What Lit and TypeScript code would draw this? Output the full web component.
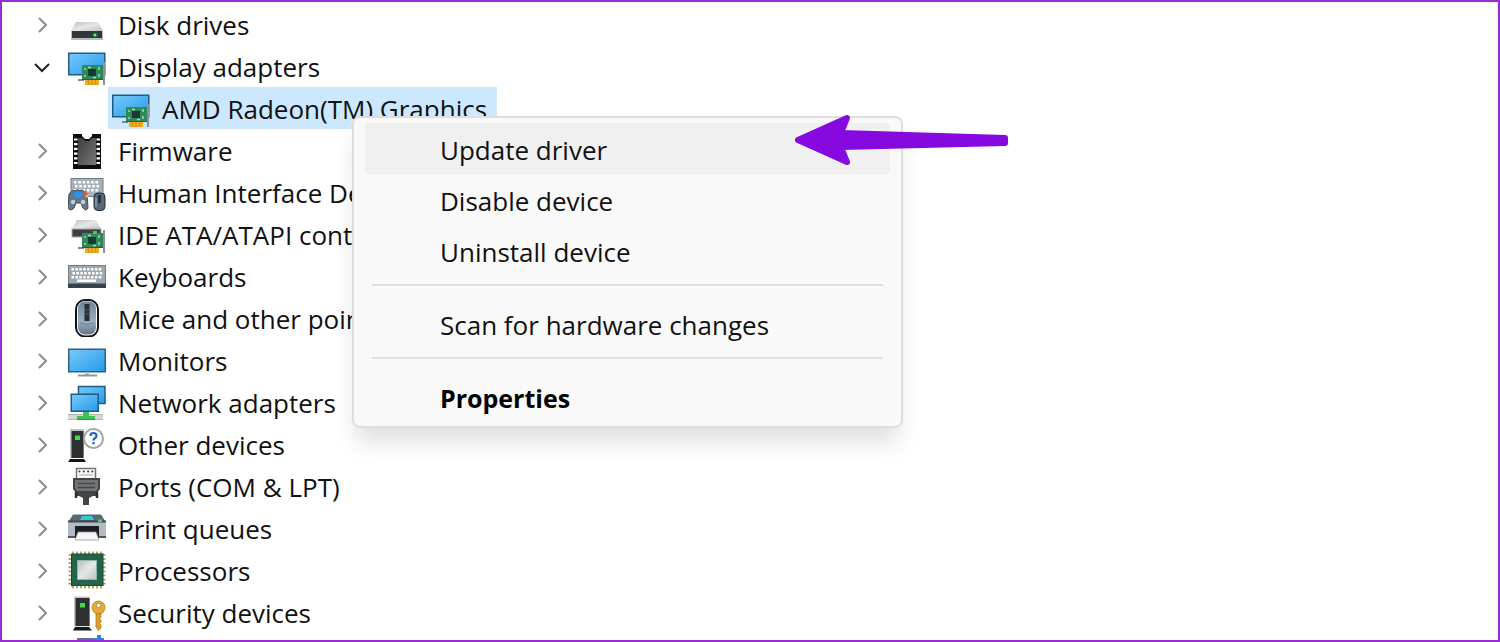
import { LitElement, html, svg, css } from "lit";
import { customElement } from "lit/decorators.js";
import { classMap } from "lit/directives/class-map.js";

const range = (n: number) => Array.from({ length: n }, (_, i) => i);

const card = svg`
  <path d="M10 33h6" stroke="#5b6570" stroke-width="1.5"/>
  <rect x="17" y="33" width="14" height="5" fill="#f0a81e"/>
  <path d="M20.5 33v5M24 33v5M27.500 33v5" stroke="#c98a1a" stroke-width=".8"/>
  <rect x="14" y="18" width="21" height="15" fill="#2f8a5b"/>
  <path d="M14 32.500h21" stroke="#1d6340"/>
  <rect x="20" y="22" width="8" height="7" fill="#173c2f"/>
  <path d="M17 21v2M17 28v2M31 20v3M31 27v3M20 20.500h3M25 30.500h3" stroke="#a6d9b4" stroke-width="1.5"/>
  <rect x="35" y="15" width="2" height="23" fill="#8a9096"/>`;

const keys = (x: number, y: number, cols: number, rows: number, step: number) =>
  range(rows).map((r) => range(cols).map((c) => svg`<rect x=${x + c * step + (r % 2)} y=${y + r * 4} width="2.500" height="2.500" fill="#fff"/>`));

const icons: Record<string, unknown> = {
  disk: svg`
    <path d="M8 17h22l5 9H3z" fill="url(#silver)"/>
    <rect x="3" y="26" width="32" height="9" fill="#b9bcbf"/>
    <rect x="4" y="26" width="30" height="7" fill="#333638"/>
    <circle cx="27" cy="30" r="2.500" fill="#1c7a2a"/><circle cx="27" cy="30" r="1.300" fill="#5dff6a"/>`,
  display: svg`
    <rect x=".75" y="6.250" width="36" height="21.500" fill="url(#screen)" stroke="#1d5c86" stroke-width="1.500"/>${card}`,
  firmware: svg`
    <path d="M5 3h9v2l3 3h4l3-3V3h9v35H5z" fill="#0c0c0c"/>
    ${range(6).map((i) => svg`<path d=${`M6 ${8.500 + i * 4.700}h3.500M28.500 ${8.500 + i * 4.700}H32`} stroke="#fff" stroke-width="2.200"/>`)}
    <path d="M10 7h4l3 3h4l3-3h4v27H10z" fill="url(#chip)"/>`,
  hid: svg`
    <rect x="3" y="5.500" width="32" height="18" fill="#a9b2bb" stroke="#6f7c89"/>
    ${keys(6, 8, 6, 3, 4.300)}
    <path d="M4 18q6-2 12 0l3 3 1 14q-2 4-5 0l-2-5H8l-2 5q-4 4-6 0l1-14z" fill="#66798a" stroke="#3d4c59"/>
    <path d="M6 19h8v3l-2 3H8l-2-3z" fill="#2596e8"/>
    <circle cx="17" cy="20" r="2" fill="#e4553b"/><circle cx="19" cy="23" r="1.500" fill="#efc33c"/>
    <circle cx="5" cy="29" r="2.200" fill="#c5ced7"/><circle cx="15" cy="29" r="2.200" fill="#c5ced7"/>
    <rect x="26" y="20" width="11" height="17.500" rx="4" fill="#56697a" stroke="#202a33"/>
    <path d="M31.500 22v8" stroke="#1f2830" stroke-width="2.500"/><path d="M28 25v9" stroke="#a8b7c5"/>`,
  ide: svg`
    <path d="M9 5h19l5 9H4z" fill="url(#silver)"/>
    <rect x="4" y="14" width="29" height="8" fill="#3d4042" stroke="#aaa"/>
    ${card}<rect x="25" y="16" width="4" height="3" fill="#37d44a"/>`,
  keyboard: svg`
    <rect x=".5" y="8.500" width="37" height="22" fill="#9fa8af" stroke="#747d84"/>
    <rect x="0" y="26.500" width="38" height="4.500" fill="#35424b"/>
    ${keys(3.500, 11, 8, 3, 3.900)}<rect x="9" y="22.500" width="19" height="2.500" fill="#fff"/>`,
  mouse: svg`
    <rect x="8" y="1" width="22" height="36.500" rx="9" fill="#f6f6f6" stroke="#101214" stroke-width="2"/>
    <rect x="10" y="2.500" width="18" height="33" rx="7" fill="url(#mouse)"/>
    <path d="M12 24q7 3 14 0" stroke="#72849a" fill="none"/>
    <rect x="16.500" y="5" width="5" height="17" fill="#272d33"/><path d="M17 11h4M17 15h4" stroke="#5b666f"/>`,
  monitor: svg`
    <rect x=".75" y="8.250" width="36.500" height="22.500" fill="url(#screen)" stroke="#33607d" stroke-width="1.500"/>
    <path d="M19 31v3" stroke="#b8c2c8" stroke-width="4"/><path d="M10 34.500h19" stroke="#8b989f" stroke-width="2"/>`,
  network: svg`
    <rect x="10.500" y="3.500" width="26.500" height="17" fill="url(#screen)" stroke="#1d5c86" stroke-width="1.500"/>
    <rect x="0" y="31" width="35" height="6" fill="#d4d8d4"/><path d="M0 31.500h35M0 36.500h35" stroke="#b3b8b3"/>
    <path d="M9 37v-4h6v-4h6v4h6v4z" fill="#3dc353"/><path d="M9 36.500h18" stroke="#289b3d"/>
    <rect x="3.250" y="11.250" width="27" height="17" fill="url(#screen)" stroke="#1d5c86" stroke-width="1.500"/>`,
  other: svg`
    <path d="M2 4h14v29H2z" fill="#c2c4c5"/><rect x="3.500" y="6" width="12" height="27" fill="#2d2f30"/>
    <path d="M2 34h14l2 3H0z" fill="#161718"/>
    <circle cx="25.500" cy="13.500" r="9.500" fill="#fff" stroke="#a2a6a9" stroke-width="2"/>
    <rect x="7" y="10.500" width="5" height="4.500" fill="#3ddc4a"/>
    <path d="M22.500 11q0-3 3-3t3 2.700q0 1.600-1.600 2.600t-1.400 2.400M25.500 17v2.200" fill="none" stroke="#1763c7" stroke-width="2.200"/>`,
  ports: svg`
    <rect x="8.500" y="1.500" width="19" height="11" fill="#fafafa" stroke="#6f7376" stroke-width="1.500"/>
    ${range(4).map((i) => svg`<circle cx=${11.500 + i * 4.300} cy="4.500" r="1" fill="#333"/>`)}
    <path d="M11 8h14" stroke="#aaa"/>
    <path d="M5 11h27v11l-3 4v3h-4l-4 2v7h-6v-7l-4-2H8v-3l-3-4z" fill="#424547"/>
    <path d="M7 13h23v8l-2 3H9l-2-3z" fill="#717578"/><path d="M10 16.500h17M10 20.500h17" stroke="#45494c" stroke-width="1.500"/>
    <path d="M8 25v6M29 25v6" stroke="#2a2c2e" stroke-width="2.500"/>`,
  printer: svg`
    <path d="M5 5.500h28l5 8H0z" fill="#596774"/><path d="M14 7h10l2 4H12z" fill="#35c8c8"/>
    <rect x="0" y="12" width="38" height="16" fill="#b3bcc5"/><path d="M0 12.500h38" stroke="#3f4b55" stroke-width="2"/>
    <rect x="30" y="10.500" width="4" height="2.500" fill="#3de04b"/>
    <path d="M0 28h38" stroke="#4c5760" stroke-width="2"/>
    <path d="M7 17h24v12H7z" fill="#1b1f23"/><path d="M10 23h18l3 8H7z" fill="#f5f5f5" stroke="#969ba0" stroke-width=".8"/>`,
  cpu: svg`
    ${range(8).map((i) => svg`<path d=${`M${5 + i * 4} 0.500v37M0.500 ${4 + i * 4.100}h37`} stroke="#b59a54" stroke-width="1.700"/>`)}
    <rect x="3.500" y="3" width="31.500" height="31.500" fill="#21664c" stroke="#174c38"/>
    <rect x="9.500" y="9.500" width="19" height="19" fill="url(#silver)" stroke="#8fb7a4"/>`,
  security: svg`
    <path d="M6 3.500h16v30H6z" fill="#c2c4c5"/><rect x="7.500" y="5" width="14" height="28" fill="#2d2f30"/>
    <path d="M7 34h14l3 3.500H5z" fill="#161718"/>
    <rect x="12" y="10" width="5" height="4.500" fill="#3ddc4a"/>
    <path d="M28 19v15l2.500 3.500L33 35v-3l-1.500-1.500L33 29v-2l-1.500-1L33 24v-5z" fill="#dda02f" stroke="#a97412" stroke-width=".7"/>
    <circle cx="30.500" cy="14.500" r="6.500" fill="#e3ab3e" stroke="#b07a18" stroke-width=".8"/>
    <circle cx="30.500" cy="12.500" r="2.200" fill="#fff" stroke="#b07a18" stroke-width=".8"/>`,
  software: svg`
    <rect x="9" y="3" width="17" height="20" fill="#5a7389"/><path d="M26 3h3V0h4v3h3v20H26z" fill="#2d86e0"/>`,
};

interface Device {
  label: string;
  icon: string;
  child?: string;
}

const devices: Device[] = [
  { label: "Disk drives", icon: "disk" },
  { label: "Display adapters", icon: "display", child: "AMD Radeon(TM) Graphics" },
  { label: "Firmware", icon: "firmware" },
  { label: "Human Interface Devices", icon: "hid" },
  { label: "IDE ATA/ATAPI controllers", icon: "ide" },
  { label: "Keyboards", icon: "keyboard" },
  { label: "Mice and other pointing", icon: "mouse" },
  { label: "Monitors", icon: "monitor" },
  { label: "Network adapters", icon: "network" },
  { label: "Other devices", icon: "other" },
  { label: "Ports (COM & LPT)", icon: "ports" },
  { label: "Print queues", icon: "printer" },
  { label: "Processors", icon: "cpu" },
  { label: "Security devices", icon: "security" },
  { label: "", icon: "software" },
];

@customElement("app-root")
export class AppRoot extends LitElement {
  static styles = css`
    :host {
      display: block;
      position: relative;
      box-sizing: border-box;
      height: 100vh;
      overflow: hidden;
      padding: 1px 0 0 28px;
      border: 2px solid #9a2ad6;
      background: #fff;
      color: #111;
      font-family: "Open Sans", "Noto Sans", sans-serif;
      font-size: 26px;
    }
    ul {
      list-style: none;
      margin: 0;
      padding: 0;
    }
    .row {
      display: flex;
      align-items: center;
      height: 42px;
      white-space: nowrap;
    }
    .toggle {
      display: grid;
      place-items: center;
      width: 24px;
      height: 24px;
      margin-right: 14px;
      padding: 2px 0 0;
      border: 0;
      background: none;
    }
    .chevron {
      width: 18px;
      height: 18px;
      fill: none;
      stroke: #8b8b8b;
      stroke-width: 2;
    }
    .open .chevron {
      stroke: #222;
    }
    .icon {
      flex: none;
      width: 38px;
      height: 38px;
      margin-right: 12px;
    }
    .label {
      line-height: 40px;
      padding-top: 2px;
    }
    .child {
      display: flex;
      margin-left: 78px;
    }
    .selected {
      padding: 0 10px 0 4px;
      background: #cce8ff;
    }
    .menu {
      position: absolute;
      left: 350px;
      top: 114px;
      box-sizing: border-box;
      width: 551px;
      padding: 5px 11px 4px;
      border: 2px solid #dedede;
      border-radius: 8px;
      background: #f9f9f9;
      box-shadow: 0 18px 24px -4px rgba(0, 0, 0, 0.13);
    }
    .item {
      display: block;
      width: 100%;
      height: 51px;
      padding: 2px 0 0 75px;
      border: 0;
      border-radius: 4px;
      background: none;
      color: #111;
      font: inherit;
      text-align: left;
    }
    .hover {
      background: #f0f0f0;
    }
    .strong {
      color: #000;
      font-size: 25px;
      font-weight: 700;
    }
    .separator {
      height: 2px;
      margin: 8px 7px 12px;
      border: 0;
      background: #e0e0e0;
    }
    .arrow {
      position: absolute;
      left: 792px;
      top: 112px;
      width: 216px;
      height: 54px;
    }
    .defs {
      position: absolute;
      width: 0;
      height: 0;
    }
  `;

  private icon(name: string) {
    return html`<svg class="icon" viewBox="0 0 38 38" aria-hidden="true">${icons[name]}</svg>`;
  }

  private device(d: Device) {
    const open = Boolean(d.child);
    return html`<li>
      <div class="row">
        <button class=${classMap({ toggle: true, open })} aria-expanded=${open} aria-label=${open ? "Collapse" : "Expand"}>
          <svg class="chevron" viewBox="0 0 18 18"><path d=${open ? "M2 6l7 7 7-7" : "M6 2l7 7-7 7"} /></svg>
        </button>
        ${this.icon(d.icon)}
        <span class="label">${d.label}</span>
      </div>
      ${d.child
        ? html`<ul class="child"><li class="row selected">${this.icon("display")}<span class="label">${d.child}</span></li></ul>`
        : ""}
    </li>`;
  }

  render() {
    return html`
      <svg class="defs" aria-hidden="true">
        <linearGradient id="screen" x2="1" y2="1"><stop stop-color="#79c9fb" /><stop offset="1" stop-color="#259be9" /></linearGradient>
        <linearGradient id="silver" x2="1" y2="1"><stop stop-color="#b9bcbe" /><stop offset=".5" stop-color="#e6e7e8" /><stop offset="1" stop-color="#bfc1c3" /></linearGradient>
        <linearGradient id="chip" x2="1" y2="1"><stop stop-color="#3d3d3d" /><stop offset="1" stop-color="#777" /></linearGradient>
        <linearGradient id="mouse" x2="0" y2="1"><stop stop-color="#718397" /><stop offset=".6" stop-color="#9caec1" /><stop offset="1" stop-color="#64768a" /></linearGradient>
      </svg>
      <ul>${devices.map((d) => this.device(d))}</ul>
      <div class="menu" role="menu">
        <button class="item hover" role="menuitem">Update driver</button>
        <button class="item" role="menuitem">Disable device</button>
        <button class="item" role="menuitem">Uninstall device</button>
        <hr class="separator" />
        <button class="item" role="menuitem">Scan for hardware changes</button>
        <hr class="separator" />
        <button class="item strong" role="menuitem">Properties</button>
      </div>
      <svg class="arrow" viewBox="0 0 216 54" aria-hidden="true">
        <path d="M4 26L53 4 47 19 211 24V29L47 33 53 48z" fill="#860ae0" stroke="#860ae0" stroke-width="6" stroke-linejoin="round" />
      </svg>
    `;
  }
}
